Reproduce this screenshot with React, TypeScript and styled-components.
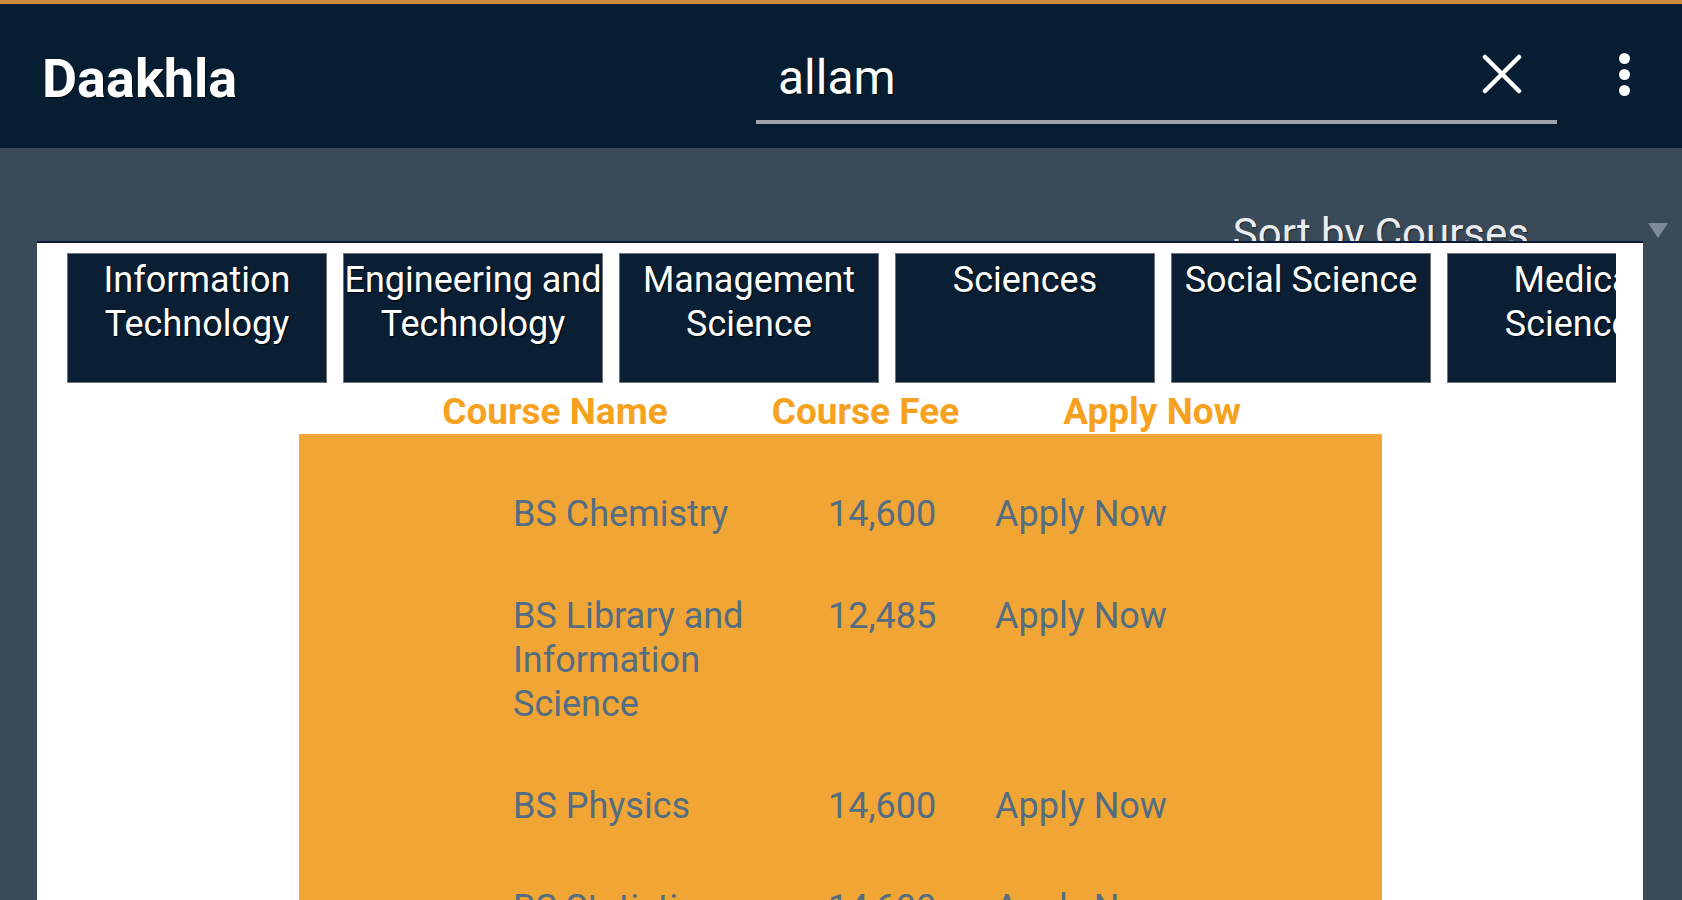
import React from "react";
import styled, {createGlobalStyle} from "styled-components";

type Course = {
  name: string;
  fee: string;
}

const CATEGORIES = [
  "Information Technology",
  "Engineering and Technology",
  "Management Science",
  "Sciences",
  "Social Science",
  "Medical Sciences",
  "Arts and Humanities",
];

const COURSES: Course[] = [
  {name: "BS Chemistry", fee: "14,600"},
  {name: "BS Library and Information Science", fee: "12,485"},
  {name: "BS Physics", fee: "14,600"},
  {name: "BS Statistics", fee: "14,600"},
  {name: "BS Mathematics", fee: "14,600"},
];

const GlobalStyle = createGlobalStyle`
  html, body {
    margin: 0;
    padding: 0;
    height: 100%;
    overflow: hidden;
    background: #3a4a59;
    font-family: Roboto, "Liberation Sans", Arial, sans-serif;
  }
  * {
    box-sizing: border-box;
  }
`;

const Page = styled.div`
  width: 1682px;
  height: 900px;
  display: flex;
  flex-direction: column;
  background: #3a4a59;
  overflow: hidden;
`;

const AppBar = styled.header`
  flex: 0 0 148px;
  display: grid;
  grid-template-columns: 714px 801px 1fr;
  align-items: center;
  padding-left: 42px;
  background: #071e32;
  border-top: 4px solid #c98b3c;
`;

const Title = styled.h1`
  margin: 0;
  padding-top: 6px;
  font-size: 54px;
  line-height: 64px;
  font-weight: 700;
  color: #fff;
  text-shadow: 1px 1px 1px rgba(0, 0, 0, 0.7);
`;

const SearchField = styled.div`
  align-self: end;
  margin-bottom: 24px;
  height: 74px;
  display: flex;
  align-items: center;
  justify-content: space-between;
  padding: 0 35px 14px 22px;
  border-bottom: 4px solid #a2a2ab;
`;

const SearchText = styled.span`
  font-size: 48px;
  line-height: 56px;
  color: #fff;
  text-shadow: 1px 1px 1px rgba(0, 0, 0, 0.7);
`;

const IconButton = styled.button`
  display: flex;
  align-items: center;
  justify-content: center;
  padding: 0;
  margin-top: -8px;
  border: none;
  background: none;
  color: #fff;
`;

const Kebab = styled.div`
  justify-self: center;
  margin-left: 9px;
  display: flex;
  flex-direction: column;
  gap: 5px;
  margin-top: -3px;
`;

const Dot = styled.span`
  width: 11px;
  height: 11px;
  border-radius: 50%;
  background: #fff;
  box-shadow: 0 0 1px rgba(0, 0, 0, 0.8);
`;

const Main = styled.main`
  flex: 1;
  display: flex;
  flex-direction: column;
  min-height: 0;
`;

const SortRow = styled.div`
  margin-top: 64px;
  height: 44px;
  display: flex;
  align-items: center;
  justify-content: flex-end;
  padding-right: 14px;
`;

const SortLabel = styled.span`
  font-size: 42px;
  line-height: 44px;
  color: #e8ecef;
  text-shadow: 1px 1px 1px rgba(0, 0, 0, 0.5);
`;

const Caret = styled.span`
  margin-left: 119px;
  margin-top: -8px;
  width: 0;
  height: 0;
  border-left: 10.5px solid transparent;
  border-right: 10.5px solid transparent;
  border-top: 15px solid #7e8a95;
`;

const Card = styled.section`
  position: relative;
  margin: -15px 39px 0 37px;
  flex: 1;
  background: #fff;
  border-top: 2px solid #0b1a3a;
  padding: 10px 27px 0 30px;
  overflow: hidden;
`;

const TabStrip = styled.div`
  display: flex;
  gap: 16px;
  overflow: hidden;
`;

const Tab = styled.div`
  flex: 0 0 260px;
  height: 130px;
  padding-top: 4px;
  background: #0a1f33;
  border: 1px solid #6d737b;
  color: #fff;
  font-size: 36px;
  line-height: 44px;
  text-align: center;
  text-shadow: 1px 1px 1px rgba(0, 0, 0, 0.8);
`;

const ColumnHead = styled.div`
  margin-top: 9px;
  display: flex;
  justify-content: center;
  gap: 104px;
  font-size: 37px;
  line-height: 40px;
  font-weight: 700;
  color: #f7a21e;
`;

const Table = styled.div`
  margin: 2px 0 0 232px;
  width: 1083px;
  padding-top: 29px;
  background: #f1a535;
`;

const Row = styled.div`
  display: grid;
  grid-template-columns: 315px 167px auto;
  padding: 29px 0 29px 214px;
  font-size: 36px;
  line-height: 44px;
  color: #536d82;
`;

const NameCell = styled.span`
  padding-right: 35px;
`;

export default function App() {
  return <>
    <GlobalStyle />
    <Page>
      <AppBar>
        <Title>Daakhla</Title>
        <SearchField>
          <SearchText>allam</SearchText>
          <IconButton aria-label="Clear">
            <svg width="40" height="40" viewBox="0 0 40 40">
              <path d="M3 3 L37 37 M37 3 L3 37" stroke="#fff" strokeWidth="4.5" strokeLinecap="round" />
            </svg>
          </IconButton>
        </SearchField>
        <Kebab>
          <Dot />
          <Dot />
          <Dot />
        </Kebab>
      </AppBar>
      <Main>
        <SortRow>
          <SortLabel>Sort by Courses</SortLabel>
          <Caret />
        </SortRow>
        <Card>
          <TabStrip>
            {CATEGORIES.map(c => (
              <Tab key={c}>{c}</Tab>
            ))}
          </TabStrip>
          <ColumnHead>
            <span>Course Name</span>
            <span>Course Fee</span>
            <span>Apply Now</span>
          </ColumnHead>
          <Table>
            {COURSES.map(item => (
              <Row key={item.name}>
                <NameCell>{item.name}</NameCell>
                <span>{item.fee}</span>
                <span>Apply Now</span>
              </Row>
            ))}
          </Table>
        </Card>
      </Main>
    </Page>
  </>
}
